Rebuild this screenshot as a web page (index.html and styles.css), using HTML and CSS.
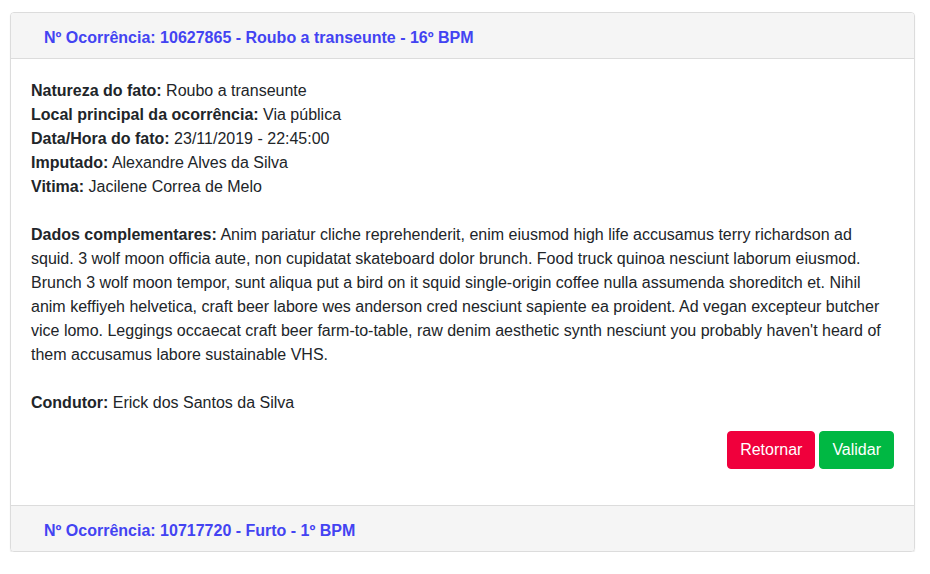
FILE: index.html
```html
<!DOCTYPE html>
<html lang="pt-BR">
<head>
<meta charset="utf-8">
<title>Ocorrências</title>
<link rel="stylesheet" href="styles.css">
</head>
<body>
<div class="accordion">
  <div class="section">
    <div class="section-header">
      <span class="header-link">Nº Ocorrência: 10627865 - Roubo a transeunte - 16º BPM</span>
    </div>
    <div class="section-body">
      <div class="info">
        <div><b>Natureza do fato:</b> Roubo a transeunte</div>
        <div><b>Local principal da ocorrência:</b> Via pública</div>
        <div><b>Data/Hora do fato:</b> 23/11/2019 - 22:45:00</div>
        <div><b>Imputado:</b> Alexandre Alves da Silva</div>
        <div><b>Vitima:</b> Jacilene Correa de Melo</div>
      </div>
      <p class="info"><b>Dados complementares:</b> Anim pariatur cliche reprehenderit, enim eiusmod high life accusamus terry richardson ad squid. 3 wolf moon officia aute, non cupidatat skateboard dolor brunch. Food truck quinoa nesciunt laborum eiusmod. Brunch 3 wolf moon tempor, sunt aliqua put a bird on it squid single-origin coffee nulla assumenda shoreditch et. Nihil anim keffiyeh helvetica, craft beer labore wes anderson cred nesciunt sapiente ea proident. Ad vegan excepteur butcher vice lomo. Leggings occaecat craft beer farm-to-table, raw denim aesthetic synth nesciunt you probably haven't heard of them accusamus labore sustainable VHS.</p>
      <p class="info"><b>Condutor:</b> Erick dos Santos da Silva</p>
      <div class="actions">
        <button class="btn btn-red" type="button">Retornar</button>
        <button class="btn btn-green" type="button">Validar</button>
      </div>
    </div>
  </div>
  <div class="section last">
    <div class="section-header">
      <span class="header-link">Nº Ocorrência: 10717720 - Furto - 1º BPM</span>
    </div>
  </div>
</div>
</body>
</html>
```
FILE: styles.css
```css
html, body {
  margin: 0;
  padding: 0;
  background: #ffffff;
}
body {
  padding: 12px 15px 0 10px;
  font-family: "Liberation Sans", Arial, sans-serif;
  font-size: 16px;
  line-height: 24px;
  color: #212529;
}
.accordion {
  border: 1px solid #dcdcdc;
  border-radius: 4px;
  overflow: hidden;
  box-shadow: 0 1px 1px rgba(0, 0, 0, 0.12);
}
.section-header {
  background: #f5f5f5;
  height: 24px;
  padding: 13px 20px 8px 33px;
  border-bottom: 1px solid #dcdcdc;
}
.section.last .section-header {
  border-bottom: 0;
}
.header-link {
  font-weight: bold;
  color: #4343f2;
}
.section-body {
  padding: 20px;
  border-bottom: 1px solid #dcdcdc;
}
.info {
  margin: 0 0 24px 0;
}
.info b {
  font-weight: bold;
}
.actions {
  display: flex;
  justify-content: flex-end;
  gap: 4px;
  margin: -8px 0 16px 0;
}
.btn {
  font-family: "Liberation Sans", Arial, sans-serif;
  font-size: 16px;
  line-height: 24px;
  padding: 6px 12px;
  border: 1px solid transparent;
  border-radius: 4px;
  color: #ffffff;
  cursor: pointer;
}
.btn-red {
  background: #f0003c;
  border-color: #f0003c;
}
.btn-green {
  background: #00b843;
  border-color: #00b843;
}
```
